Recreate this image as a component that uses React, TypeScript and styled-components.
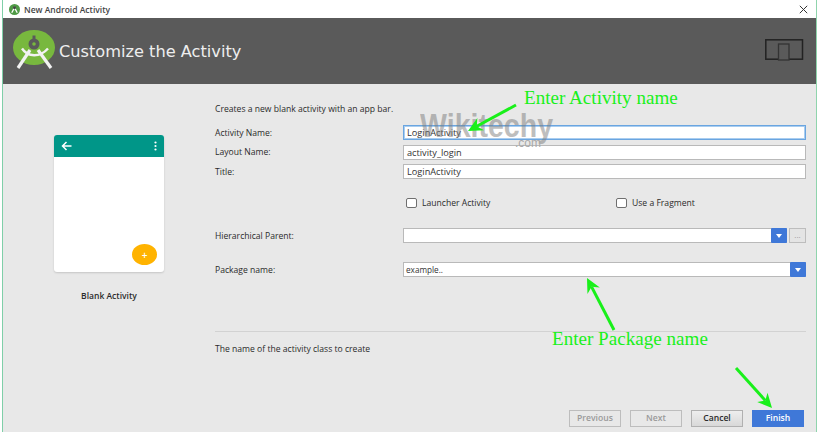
import styled, { createGlobalStyle } from "styled-components";

const GlobalStyle = createGlobalStyle`
  html, body {
    margin: 0;
    padding: 0;
    background: #ffffff;
  }
  * { box-sizing: border-box; }
`;

const green = "#19f01a";

const Frame = styled.div`
  position: relative;
  width: 819px;
  height: 432px;
  overflow: hidden;
  padding: 0 2px;
  font-family: "Open Sans", "Liberation Sans", sans-serif;
  font-size: 8.6px;
  color: #2b2b2b;
  background: #ffffff;
`;

const Window = styled.div`
  display: flex;
  flex-direction: column;
  height: 100%;
  border-left: 1px solid #7fcfa8;
  border-right: 1px solid #8fd4ac;
`;

const TitleBar = styled.div`
  display: flex;
  align-items: center;
  height: 18px;
  padding: 0 8px 0 6px;
  background: #ffffff;
  color: #444;
  font-size: 8.5px;
  font-weight: 600;
`;

const TitleIcon = styled.svg`
  width: 11px;
  height: 11px;
  margin-right: 4px;
`;

const CloseIcon = styled.svg`
  width: 9px;
  height: 9px;
  margin-left: auto;
`;

const Header = styled.div`
  display: flex;
  align-items: center;
  height: 66px;
  padding: 0 11px 0 10px;
  background: #5a5a5a;
`;

const HeaderTitle = styled.div`
  margin-left: 4px;
  font-family: "DejaVu Sans", "Open Sans", sans-serif;
  font-size: 16.2px;
  color: #eeeeee;
`;

const DeviceIcon = styled.svg`
  width: 40px;
  height: 24px;
  margin-left: auto;
`;

const Body = styled.div`
  position: relative;
  flex: 1;
  display: flex;
  background: #e8e8e8;
`;

const PreviewColumn = styled.div`
  width: 209px;
  flex-shrink: 0;
  padding: 51px 0 0 51px;
`;

const PhoneCard = styled.div`
  position: relative;
  width: 110px;
  height: 137px;
  border-radius: 3px;
  background: #ffffff;
  box-shadow: 0 1px 2px rgba(0, 0, 0, 0.15);
  overflow: hidden;
`;

const AppBar = styled.div`
  display: flex;
  align-items: center;
  justify-content: space-between;
  height: 22px;
  padding: 0 7px;
  background: #009688;
`;

const Fab = styled.div`
  position: absolute;
  right: 7px;
  bottom: 7px;
  display: flex;
  align-items: center;
  justify-content: center;
  width: 25px;
  height: 21px;
  border-radius: 50%;
  background: #ffb300;
  color: #fff;
  font-size: 10px;
  font-weight: 600;
`;

const PreviewCaption = styled.div`
  width: 110px;
  margin-top: 18px;
  text-align: center;
  font-weight: 600;
  font-size: 8.5px;
`;

const FormColumn = styled.div`
  flex: 1;
  min-width: 0;
  display: flex;
  flex-direction: column;
  padding: 19px 10px 0 3px;
`;

const Intro = styled.div`
  height: 12px;
  line-height: 12px;
  margin-bottom: 10px;
`;

const Row = styled.div<{ $gap?: number }>`
  display: flex;
  align-items: center;
  height: 15px;
  margin-bottom: ${(p) => p.$gap ?? 4.5}px;
`;

const Label = styled.div`
  width: 188px;
  flex-shrink: 0;
  font-size: 8.6px;
  font-weight: 500;
`;

const TextField = styled.div<{ $focused?: boolean }>`
  flex: 1;
  height: 15px;
  line-height: 13px;
  padding: 0 3px;
  background: #ffffff;
  border: 1px solid ${(p) => (p.$focused ? "#6aa5e0" : "#b9b9b9")};
  box-shadow: ${(p) => (p.$focused ? "inset 0 0 0 1px #a9cdf0" : "none")};
  font-size: 9.2px;
  font-weight: 500;
  color: #333;
`;

const ComboField = styled(TextField)`
  display: flex;
  align-items: center;
  padding: 0 0 0 2px;
  border-right: 0;
  font-size: 8.2px;
`;

const ComboArrow = styled.div`
  display: flex;
  align-items: center;
  justify-content: center;
  width: 16px;
  height: 15px;
  margin-left: auto;
  margin-top: -1px;
  margin-bottom: -1px;
  flex-shrink: 0;
  background: #3f78d8;
  border-radius: 1px;

  &::after {
    content: "";
    border-left: 3.5px solid transparent;
    border-right: 3.5px solid transparent;
    border-top: 4px solid #ffffff;
  }
`;

const BrowseButton = styled.div`
  width: 17px;
  height: 15px;
  margin-left: 2px;
  flex-shrink: 0;
  border: 1px solid #bdbdbd;
  background: #e4e4e4;
  color: #999;
  line-height: 11px;
  text-align: center;
  font-size: 8px;
`;

const CheckRow = styled.div`
  display: grid;
  grid-template-columns: 210px auto;
  height: 14px;
  margin: 12.5px 0 18px 191px;
`;

const CheckItem = styled.div`
  display: flex;
  align-items: center;
  gap: 5px;
  font-weight: 500;
`;

const CheckBox = styled.span`
  width: 11px;
  height: 10px;
  border: 1px solid #6f6f6f;
  border-radius: 2px;
  background: #ffffff;
`;

const Divider = styled.div`
  height: 1px;
  margin-top: 49.5px;
  background: #d2d2d2;
`;

const Hint = styled.div`
  margin-top: 11px;
  font-weight: 500;
`;

const ButtonBar = styled.div`
  position: absolute;
  right: 12px;
  bottom: 5px;
  display: flex;
  gap: 9px;
`;

const Button = styled.div<{ $variant?: "disabled" | "primary" }>`
  width: 52px;
  height: 17px;
  line-height: 15px;
  text-align: center;
  font-weight: 600;
  border: 1px solid
    ${(p) =>
      p.$variant === "primary"
        ? "#3f78d8"
        : p.$variant === "disabled"
          ? "#bdbdbd"
          : "#b0b0b0"};
  background: ${(p) =>
    p.$variant === "primary"
      ? "#3f78d8"
      : p.$variant === "disabled"
        ? "#e8e8e8"
        : "linear-gradient(#eeeeee, #d8d8d8)"};
  color: ${(p) =>
    p.$variant === "primary"
      ? "#ffffff"
      : p.$variant === "disabled"
        ? "#9a9a9a"
        : "#2b2b2b"};
`;

const Watermark = styled.div`
  position: absolute;
  left: 420px;
  top: 108px;
  font-family: "Liberation Sans", sans-serif;
  font-size: 34px;
  font-weight: 700;
  line-height: 34px;
  color: rgba(125, 125, 125, 0.5);
  transform: scaleX(0.84);
  transform-origin: left top;
`;

const WatermarkCom = styled.div`
  position: absolute;
  left: 515px;
  top: 136px;
  font-family: "Liberation Sans", sans-serif;
  font-size: 12px;
  line-height: 14px;
  color: #a8a8a8;
`;

const Callout = styled.div<{ $left: number; $top: number }>`
  position: absolute;
  left: ${(p) => p.$left}px;
  top: ${(p) => p.$top}px;
  font-family: "Liberation Serif", serif;
  font-size: 19.1px;
  line-height: 20px;
  color: ${green};
  white-space: nowrap;
`;

const ArrowLayer = styled.svg`
  position: absolute;
  left: 0;
  top: 0;
  width: 819px;
  height: 432px;
  pointer-events: none;
`;

function Arrow({ x1, y1, x2, y2 }: { x1: number; y1: number; x2: number; y2: number }) {
  const angle = Math.atan2(y2 - y1, x2 - x1);
  const size = 16;
  const spread = 0.45;
  const ax = x2 - size * Math.cos(angle - spread);
  const ay = y2 - size * Math.sin(angle - spread);
  const bx = x2 - size * Math.cos(angle + spread);
  const by = y2 - size * Math.sin(angle + spread);
  const mx = x2 - 10 * Math.cos(angle);
  const my = y2 - 10 * Math.sin(angle);
  return (
    <>
      <line x1={x1} y1={y1} x2={mx} y2={my} stroke={green} strokeWidth={3} />
      <polygon points={`${x2},${y2} ${ax},${ay} ${mx},${my} ${bx},${by}`} fill={green} />
    </>
  );
}

export default function App() {
  return (
    <>
      <GlobalStyle />
      <Frame>
        <Window>
          <TitleBar>
            <TitleIcon viewBox="0 0 12 12">
              <circle cx="6" cy="6" r="6" fill="#4f9a45" />
              <path d="M3 9.5 6 4l3 5.5" stroke="#fff" strokeWidth="1.4" fill="none" />
              <circle cx="6" cy="4" r="1.6" fill="#444" />
            </TitleIcon>
            New Android Activity
            <CloseIcon viewBox="0 0 9 9">
              <path d="M.8.8l7.4 7.4M8.2.8 .8 8.2" stroke="#333" strokeWidth="1" />
            </CloseIcon>
          </TitleBar>
          <Header>
            <svg width="42" height="42" viewBox="0 0 42 42">
              <ellipse cx="21" cy="17.5" rx="21" ry="17.5" fill="#78b83e" />
              <circle cx="21" cy="14" r="5.5" fill="#5a5a5a" />
              <circle cx="21" cy="14" r="1.8" fill="#78b83e" />
              <rect x="19.5" y="5.5" width="3" height="4" fill="#5a5a5a" />
              <path d="M17 20 5 38" stroke="#f2f2f2" strokeWidth="3.2" />
              <path d="M25 20 38 38" stroke="#f2f2f2" strokeWidth="3.2" />
              <path d="M9 18.5c6 9 18 9 26 0" stroke="#f2f2f2" strokeWidth="2.4" fill="none" />
            </svg>
            <HeaderTitle>Customize the Activity</HeaderTitle>
            <DeviceIcon viewBox="0 0 40 24">
              <rect x="0.8" y="0.8" width="36.7" height="19.4" fill="none" stroke="#222" strokeWidth="1.5" />
              <rect x="13.5" y="5" width="10.5" height="16" fill="#5a5a5a" stroke="#333" strokeWidth="1.3" />
            </DeviceIcon>
          </Header>
          <Body>
            <PreviewColumn>
              <PhoneCard>
                <AppBar>
                  <svg width="11" height="10" viewBox="0 0 11 10">
                    <path d="M10.5 5H2M5.5 1 1.5 5l4 4" stroke="#fff" strokeWidth="1.5" fill="none" />
                  </svg>
                  <svg width="3" height="10" viewBox="0 0 3 10">
                    <circle cx="1.5" cy="1.5" r="1.1" fill="#fff" />
                    <circle cx="1.5" cy="5" r="1.1" fill="#fff" />
                    <circle cx="1.5" cy="8.5" r="1.1" fill="#fff" />
                  </svg>
                </AppBar>
                <Fab>+</Fab>
              </PhoneCard>
              <PreviewCaption>Blank Activity</PreviewCaption>
            </PreviewColumn>
            <FormColumn>
              <Intro>Creates a new blank activity with an app bar.</Intro>
              <Row>
                <Label>Activity Name:</Label>
                <TextField $focused>LoginActivity</TextField>
              </Row>
              <Row>
                <Label>Layout Name:</Label>
                <TextField>activity_login</TextField>
              </Row>
              <Row>
                <Label>Title:</Label>
                <TextField>LoginActivity</TextField>
              </Row>
              <CheckRow>
                <CheckItem>
                  <CheckBox />
                  Launcher Activity
                </CheckItem>
                <CheckItem>
                  <CheckBox />
                  Use a Fragment
                </CheckItem>
              </CheckRow>
              <Row $gap={19}>
                <Label>Hierarchical Parent:</Label>
                <ComboField>
                  <ComboArrow />
                </ComboField>
                <BrowseButton>...</BrowseButton>
              </Row>
              <Row>
                <Label>Package name:</Label>
                <ComboField>
                  example..
                  <ComboArrow />
                </ComboField>
              </Row>
              <Divider />
              <Hint>The name of the activity class to create</Hint>
            </FormColumn>
            <ButtonBar>
              <Button $variant="disabled">Previous</Button>
              <Button $variant="disabled">Next</Button>
              <Button>Cancel</Button>
              <Button $variant="primary">Finish</Button>
            </ButtonBar>
          </Body>
        </Window>
        <Watermark>Wikitechy</Watermark>
        <WatermarkCom>.com</WatermarkCom>
        <Callout $left={524} $top={88}>Enter Activity name</Callout>
        <Callout $left={552} $top={329}>Enter Package name</Callout>
        <ArrowLayer viewBox="0 0 819 432">
          <Arrow x1={516} y1={105} x2={468} y2={131} />
          <Arrow x1={614} y1={330} x2={587} y2={278} />
          <Arrow x1={736} y1={368} x2={772} y2={408} />
        </ArrowLayer>
      </Frame>
    </>
  );
}
